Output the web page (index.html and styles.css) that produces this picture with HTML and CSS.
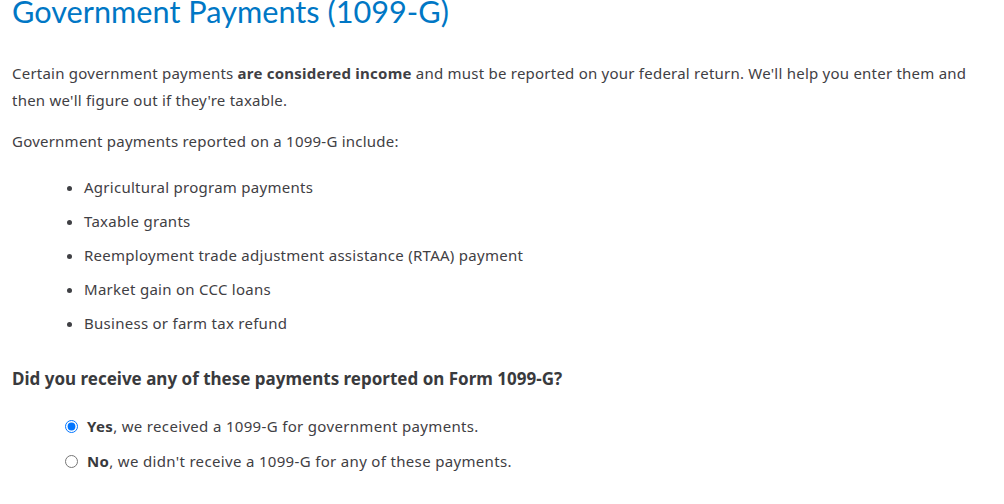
FILE: index.html
```html
<!DOCTYPE html>
<html>
<head>
<meta charset="utf-8">
<link rel="stylesheet" href="styles.css">
</head>
<body>
<div class="page">
  <h1 class="title">Government Payments (1099-G)</h1>
  <p class="para">Certain government payments <b>are considered income</b> and must be reported on your federal return. We'll help you enter them and then we'll figure out if they're taxable.</p>
  <p class="para">Government payments reported on a 1099-G include:</p>
  <ul class="list">
    <li>Agricultural program payments</li>
    <li>Taxable grants</li>
    <li>Reemployment trade adjustment assistance (RTAA) payment</li>
    <li>Market gain on CCC loans</li>
    <li>Business or farm tax refund</li>
  </ul>
  <h2 class="question">Did you receive any of these payments reported on Form 1099-G?</h2>
  <div class="options">
    <label class="option"><input type="radio" name="g" checked><span><b>Yes</b>, we received a 1099-G for government payments.</span></label>
    <label class="option"><input type="radio" name="g"><span><b>No</b>, we didn't receive a 1099-G for any of these payments.</span></label>
  </div>
</div>
</body>
</html>
```
FILE: styles.css
```css
html, body {
  margin: 0;
  padding: 0;
  background: #ffffff;
}
.page {
  padding: 0 12px;
  font-family: "Noto Sans", Lato, sans-serif;
  color: #3f4044;
  font-size: 15px;
}
.title {
  margin: -8px 0 0 0;
  font-family: Lato, "Noto Sans", sans-serif;
  font-size: 30.7px;
  line-height: 40px;
  font-weight: 400;
  color: #0077c5;
}
.para {
  margin: 28px 0 0 0;
  line-height: 27px;
  letter-spacing: 0.23px;
}
.para + .para {
  margin-top: 14px;
}
.list {
  margin: 15px 0 0 0;
  padding-left: 72px;
  letter-spacing: 0.27px;
}
.list li {
  line-height: 34px;
}
.question {
  margin: 25px 0 0 0;
  font-size: 17px;
  font-weight: 700;
  line-height: 28px;
  color: #393a3d;
}
.options {
  display: flex;
  flex-direction: column;
  gap: 11px;
  margin-top: 21px;
  padding-left: 53px;
  letter-spacing: 0.33px;
}
.option {
  display: flex;
  align-items: center;
  gap: 9px;
  line-height: 24px;
}
.option b {
  color: #393a3d;
}
.option input {
  margin: 0;
  width: 13px;
  height: 13px;
}
```
